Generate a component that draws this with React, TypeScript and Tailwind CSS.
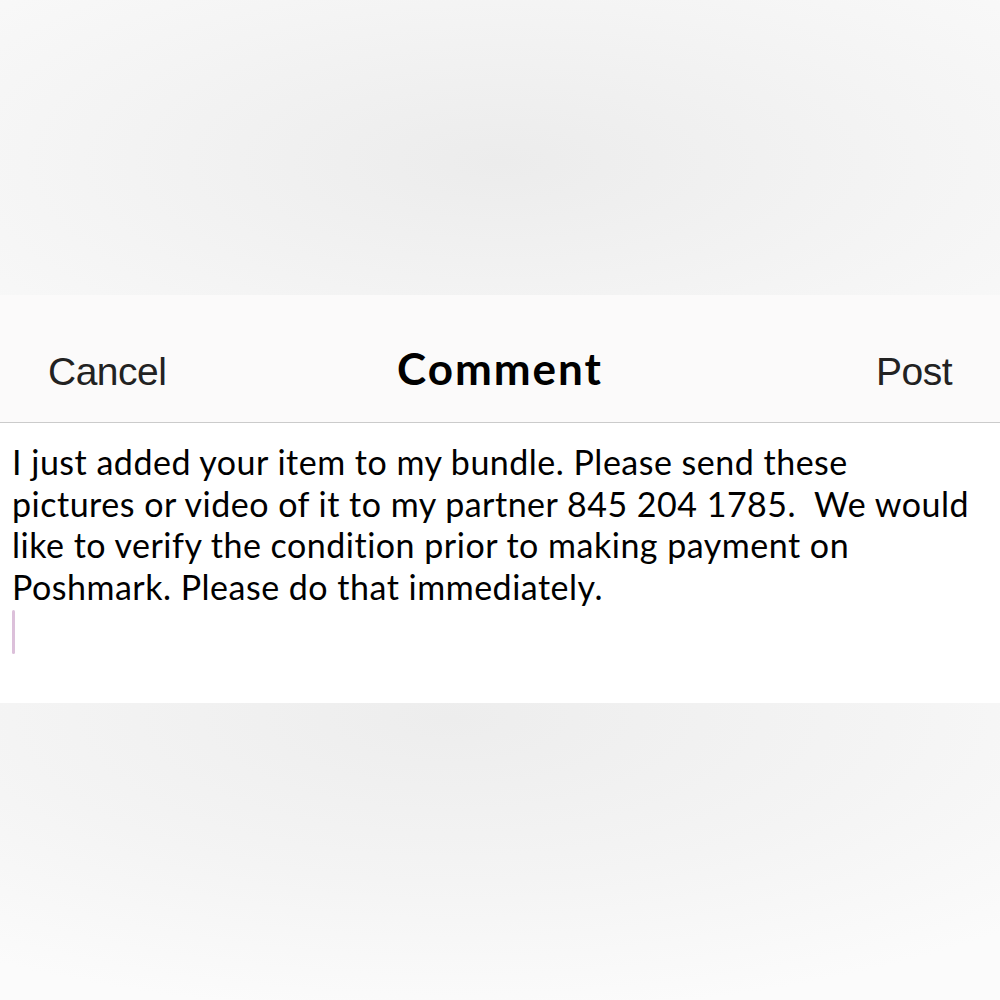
import React from 'react';

const lines = [
  'I just added your item to my bundle. Please send these',
  'pictures or video of it to my partner 845 204 1785.\u00a0 We would',
  'like to verify the condition prior to making payment on',
  'Poshmark. Please do that immediately.',
];

export default function App() {
  return (
    <div className="w-[1000px] h-[1000px] flex flex-col overflow-hidden bg-white">
      {/* backdrop above the sheet */}
      <div className="h-[295px] shrink-0 bg-[radial-gradient(ellipse_70%_90%_at_50%_55%,#ececec,#f4f4f4_60%,#f9f9f9)]"></div>

      {/* header */}
      <div className="h-[128px] shrink-0 bg-[#fbfafa] border-b border-[#cbcbcb] grid grid-cols-3 items-baseline content-end px-[48px] pb-[31px]">
        <span className="justify-self-start text-[39px] leading-none tracking-[-0.5px] text-[#222] font-['Liberation_Sans',sans-serif]">Cancel</span>
        <span className="justify-self-center text-[44px] leading-none font-bold text-black font-['Lato',sans-serif] tracking-[2px]">Comment</span>
        <span className="justify-self-end text-[39px] leading-none tracking-[-0.5px] text-[#222] font-['Liberation_Sans',sans-serif]">Post</span>
      </div>

      {/* comment body */}
      <div className="h-[280px] shrink-0 bg-white pl-[12px] pt-[18px]">
        <div className="text-[34px] leading-[41.7px] tracking-[0.5px] text-black font-['Lato',sans-serif]">
          {lines.map((l) => (
            <div key={l} className="whitespace-nowrap">{l}</div>
          ))}
        </div>
        <div className="w-[3px] h-[44px] mt-[2px] rounded-full bg-[#dcc0da]"></div>
      </div>

      {/* backdrop below the sheet */}
      <div className="flex-1 bg-[radial-gradient(ellipse_80%_100%_at_45%_5%,#ededed,#f4f4f4_55%,#fbfbfb)]"></div>
    </div>
  );
}
